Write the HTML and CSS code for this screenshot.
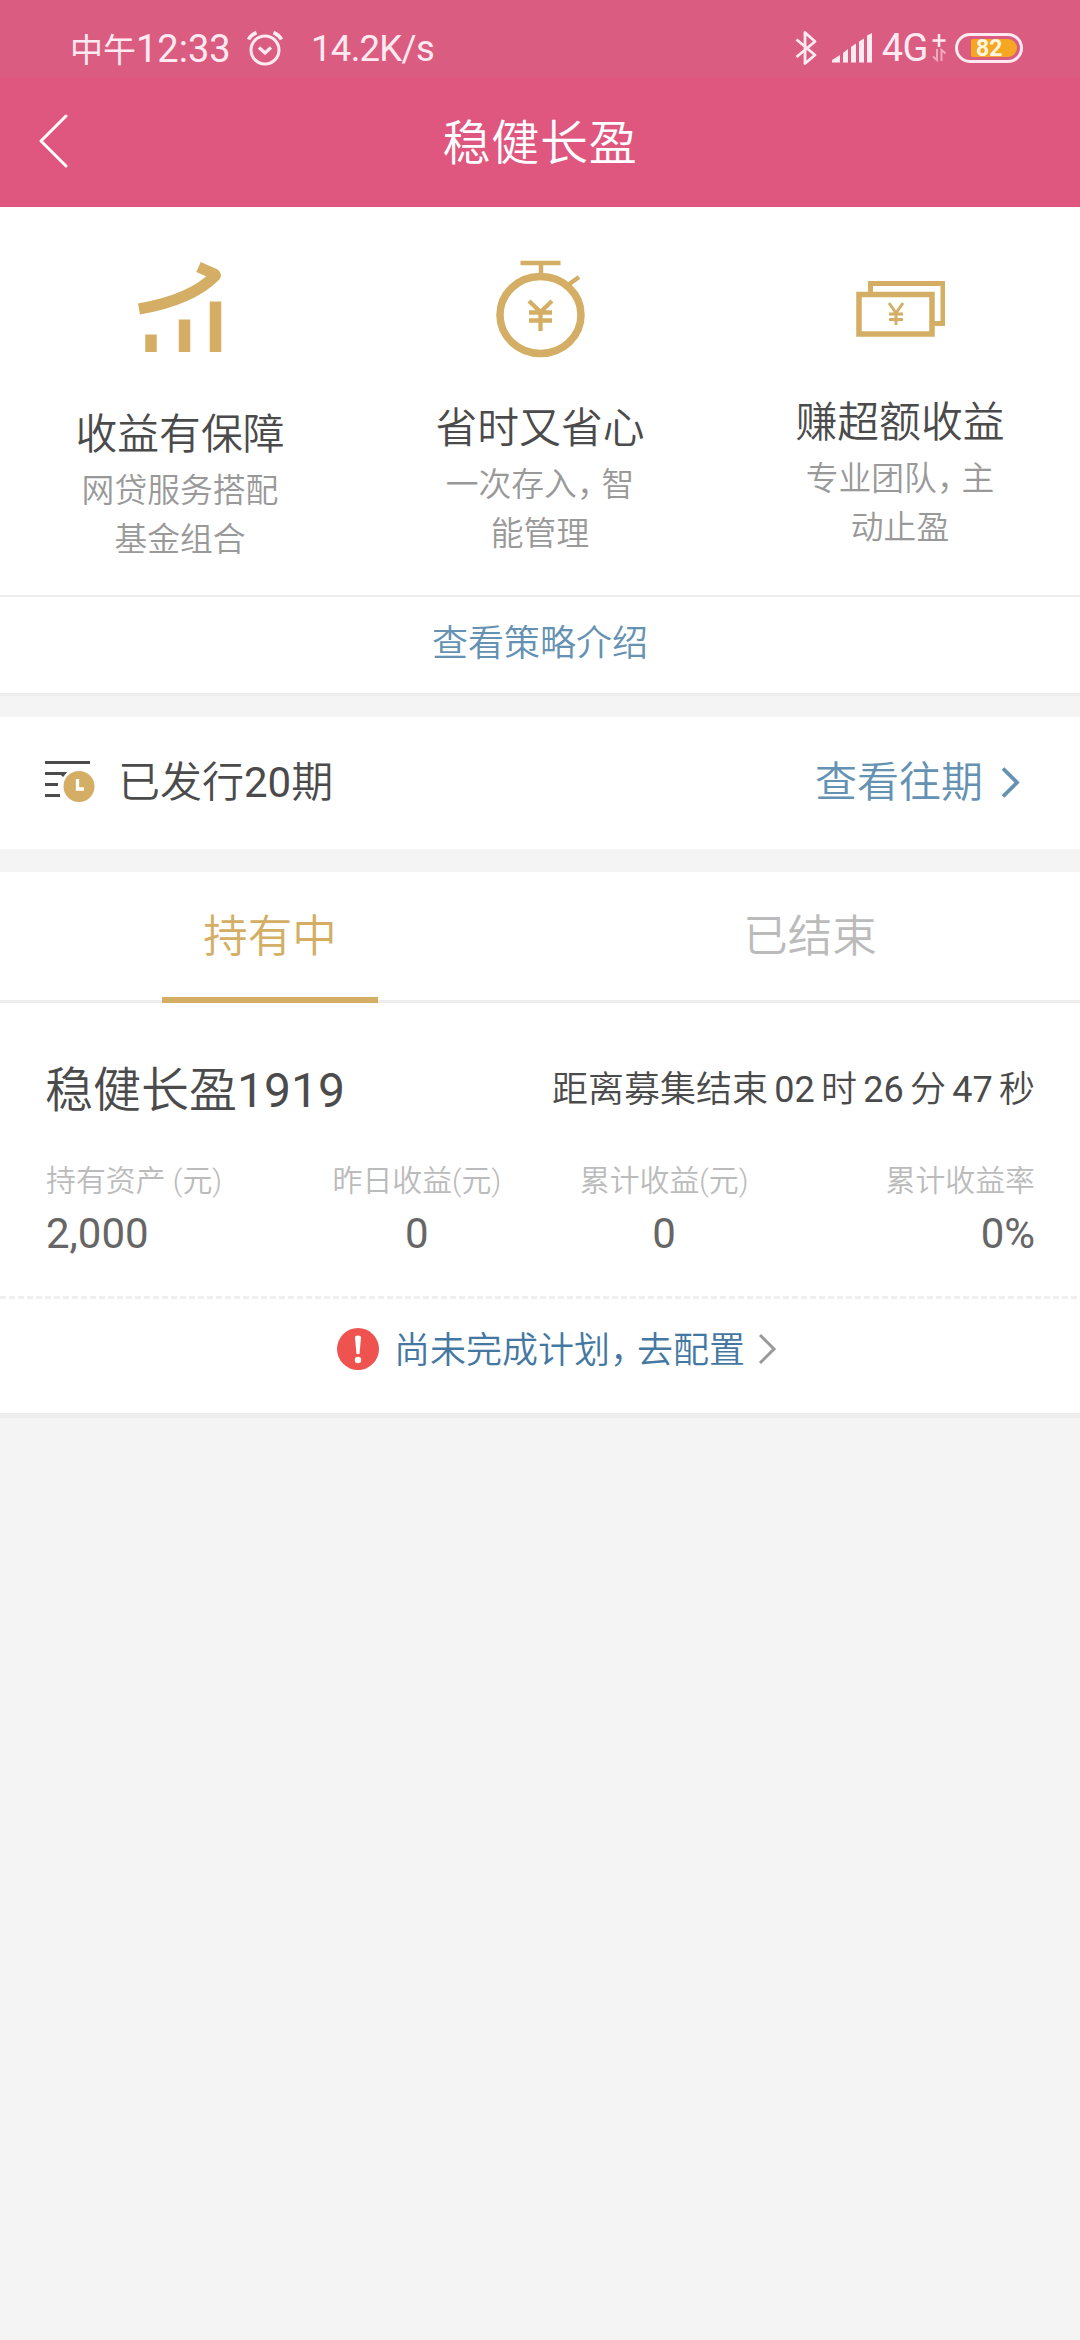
FILE: index.html
```html
<!DOCTYPE html>
<html lang="zh-CN">
<head>
<meta charset="utf-8">
<title>稳健长盈</title>
<link rel="stylesheet" href="styles.css">
</head>
<body>
<header class="header">
  <div class="status">
    <div class="status-left">
      <span class="time"><span class="noon">中午</span>12:33</span>
      <svg class="alarm" width="36" height="36" viewBox="0 0 36 36" fill="none" stroke="currentColor" stroke-width="3">
        <circle cx="18" cy="20" r="14"/>
        <path d="M1.500 9.500Q4 5 9.500 2.500M34.500 9.500Q32 5 26.500 2.500" stroke-width="3.600"/>
        <path d="M12 17.500L18 23L24 17.500" stroke-width="3.200"/>
      </svg>
      <span class="speed">14.2K/s</span>
    </div>
    <div class="status-right">
      <svg class="bluetooth" width="22" height="36" viewBox="0 0 22 36" fill="none" stroke="currentColor" stroke-width="2.800" stroke-linejoin="round">
        <path d="M1.500 9.500L20 25L10 33.500V2.500L20 11.500L1.500 27"/>
      </svg>
      <svg class="signal" width="42" height="30" viewBox="0 0 42 30" fill="currentColor">
        <path d="M0 29.500V27L8 22V29.500ZM11 29.500V20L16 16V29.500ZM19 29.500V14L24 10.500V29.500ZM27 29.500V8.500L32 5.500V29.500ZM35 29.500V2.500L40 0V29.500Z"/>
      </svg>
      <span class="network">4G</span>
      <svg class="data" width="14" height="30" viewBox="0 0 14 30" fill="none" stroke="currentColor">
        <path d="M7 1V14M.5 7.500H13.500" stroke-width="2.600"/>
        <path d="M5 16V27L1 23.500M9.500 28V17L13.500 20.500" stroke-width="2" opacity=".55"/>
      </svg>
      <div class="battery"><span class="level">82</span></div>
    </div>
  </div>
  <div class="navbar">
    <svg class="back" width="32" height="56" viewBox="0 0 32 56" fill="none" stroke="currentColor" stroke-width="3" stroke-linecap="round" stroke-linejoin="round">
      <path d="M27 3L2 28L27 53"/>
    </svg>
    <h1 class="title">稳健长盈</h1>
  </div>
</header>

<main>
  <section class="features">
    <div class="feature feature-growth">
      <svg class="feature-icon" width="90" height="100" viewBox="135 260 90 100" fill="none" stroke="currentColor">
        <path d="M139 309Q191 300 215 276Q216 275 214.500 274L198.500 267" stroke-width="11"/>
        <path d="M151 334.500V352M184.500 319.500V352M215.500 301.500V352" stroke-width="11.500"/>
      </svg>
      <h2 class="feature-title">收益有保障</h2>
      <p class="feature-text">网贷服务搭配<br>基金组合</p>
    </div>
    <div class="feature feature-time">
      <svg class="feature-icon" width="90" height="100" viewBox="495 260 90 100" fill="none" stroke="currentColor">
        <ellipse cx="540.500" cy="315" rx="40.500" ry="38.500" stroke-width="7.500"/>
        <path d="M520.500 263H560.500M541 263V275M568 285L579 277" stroke-width="4.500"/>
        <path d="M529 301L540.500 312L552 301M540.500 311V331M529 312.500H552M529 320.500H552" stroke-width="4.300"/>
      </svg>
      <h2 class="feature-title">省时又省心</h2>
      <p class="feature-text">一次存入<span class="comma">，</span>智<br>能管理</p>
    </div>
    <div class="feature feature-money">
      <svg class="feature-icon" width="90" height="100" viewBox="855 260 90 100" fill="none" stroke="currentColor">
        <path d="M859 294.500H932V334H859Z" stroke-width="5.500"/>
        <path d="M870.500 294V283.500H943V323.500H933" stroke-width="5"/>
        <path d="M889 303L896 313L903 303M896 312V325M889 314H903M889 319.500H903" stroke-width="3"/>
      </svg>
      <h2 class="feature-title">赚超额收益</h2>
      <p class="feature-text">专业团队<span class="comma">，</span>主<br>动止盈</p>
    </div>
  </section>
  <a class="strategy">查看策略介绍</a>

  <section class="issued">
    <svg class="issued-icon" width="50" height="44" viewBox="45 761 50 44">
      <path d="M45 762.500H90M45 773.500H64L62 776M45 784.500H58M45 795.500H60" fill="none" stroke="#4b4b4b" stroke-width="3"/>
      <circle cx="79" cy="786.500" r="15.500" fill="#d3ae64"/>
      <path d="M77.500 779V789H84" fill="none" stroke="#fff" stroke-width="3.300"/>
    </svg>
    <span class="issued-count">已发行<b>20</b>期</span>
    <a class="history">查看往期</a>
    <svg class="history-arrow" width="20" height="32" viewBox="0 0 20 32" fill="none" stroke="#6591b3" stroke-width="3.800">
      <path d="M2 1.500L16 15.500L2 29.500"/>
    </svg>
  </section>

  <nav class="tabs">
    <a class="tab tab-active"><span>持有中</span></a>
    <a class="tab"><span>已结束</span></a>
  </nav>

  <section class="plan">
    <div class="plan-head">
      <h3 class="plan-name">稳健长盈<b>1919</b></h3>
      <span class="countdown">距离募集结束 <b>02</b> 时 <b>26</b> 分 <b>47</b> 秒</span>
    </div>
    <dl class="stats">
      <div class="stat"><dt>持有资产 (元)</dt><dd>2,000</dd></div>
      <div class="stat"><dt>昨日收益(元)</dt><dd>0</dd></div>
      <div class="stat"><dt>累计收益(元)</dt><dd>0</dd></div>
      <div class="stat"><dt>累计收益率</dt><dd>0%</dd></div>
    </dl>
    <svg class="dashes" width="1080" height="3" viewBox="0 0 1080 3"><path d="M0 1.500H1080" stroke="#efefef" stroke-width="3" stroke-dasharray="6 3"/></svg>
    <a class="configure">
      <svg class="alert" width="42" height="42" viewBox="0 0 42 42">
        <circle cx="21" cy="21" r="21" fill="#ef5350"/>
        <path d="M18 9.500Q18 7.500 21 7.500T24 9.500L22.500 26H19.500Z" fill="#fff"/>
        <circle cx="21" cy="32" r="3.200" fill="#fff"/>
      </svg>
      <span class="configure-text">尚未完成计划<span class="comma">，</span>去配置</span>
      <svg class="configure-arrow" width="20" height="32" viewBox="0 0 20 32" fill="none" stroke="#999" stroke-width="3">
        <path d="M2 2L16 16L2 30"/>
      </svg>
    </a>
  </section>
</main>
</body>
</html>
```
FILE: styles.css
```css
* { box-sizing: border-box; margin: 0; padding: 0; }
body {
  width: 1080px;
  min-height: 2340px;
  background: #f4f4f4;
  color: #4b4b4b;
  font-family: Roboto, "Noto Sans CJK SC", sans-serif;
  font-weight: 350;
}
h1, h2, h3 { font-weight: 350; }
b { font-weight: 400; }
svg { display: block; flex: none; }
span, a, h1, h2, h3 { white-space: nowrap; }

.header { height: 207px; background: #df577f; color: #fff; }
.status {
  height: 77px;
  padding: 17px 57px 0 70px;
  display: flex;
  justify-content: space-between;
  background: #da5d81;
  color: #ffeaf1;
  font-weight: 400;
}
.status-left, .status-right { display: flex; align-items: center; height: 62px; }
.time { font-size: 38px; line-height: 62px; width: 177px; padding-top: 3px; }
.noon { font-size: 33px; }
.speed { font-size: 36.500px; letter-spacing: -.7px; margin-left: 28px; padding-top: 1px; }
.bluetooth { margin-right: 15px; }
.network { font-size: 38px; letter-spacing: -.5px; margin-left: 8px; }
.data { margin: 0 9px 0 4px; }
.battery { width: 68px; height: 30px; border: 3px solid #ffeaf1; border-radius: 15px; padding: 3px 3px 3px 13px; }
.level {
  display: block;
  height: 18px;
  padding-left: 5px;
  border-radius: 2px 9px 9px 2px;
  background: #f5a623;
  color: #fff6df;
  font-size: 23px;
  font-weight: 700;
  line-height: 19px;
}
.navbar { height: 130px; padding-top: 29px; display: grid; grid-template-columns: 80px 1fr 80px; }
.back { margin: 7px 0 0 39px; }
.title { padding-top: 3px; font-size: 48px; line-height: 70px; letter-spacing: .8px; text-align: center; }

.features { height: 390px; display: grid; grid-template-columns: repeat(3, 1fr); background: #fff; border-bottom: 2px solid #eee; }
.feature { display: flex; flex-direction: column; align-items: center; text-align: center; padding-top: 53px; }
.feature-icon { color: #d3ae64; }
.feature-title { font-size: 41.800px; line-height: 62px; }
.feature-text { padding-top: 1px; color: #999; font-size: 32.800px; line-height: 49px; }
.feature-growth .feature-title { margin-top: 44px; }
.feature-time .feature-title { margin-top: 38px; }
.feature-money .feature-title { margin-top: 32px; }
.comma { letter-spacing: -.25em; }

.strategy { display: block; height: 99px; background: #fff; border-bottom: 3px solid #ededed; color: #6591b3; font-size: 36px; line-height: 94px; text-align: center; }

.issued { height: 132px; margin-top: 21px; padding: 0 59px 0 45px; display: flex; align-items: center; background: #fff; font-size: 42px; line-height: 60px; }
.issued-count { margin-left: 23px; }
.history { margin-left: auto; color: #6591b3; }
.history-arrow { margin-left: 18px; }

.tabs { height: 131px; margin-top: 23px; display: grid; grid-template-columns: 1fr 1fr; background: #fff; border-bottom: 3px solid #ededed; }
.tab { display: flex; justify-content: center; color: #bbb; font-size: 44.500px; line-height: 130px; }
.tab span { width: 216px; height: 131px; text-align: center; }
.tab-active { color: #d3ae64; }
.tab-active span { border-bottom: 6px solid #d3ae64; }

.plan { height: 415px; background: #fff; border-bottom: 5px solid #ededed; }
.plan-head { height: 172px; padding: 0 45px; display: flex; justify-content: space-between; line-height: 175px; }
.plan-name { font-size: 48px; }
.countdown { font-size: 36px; word-spacing: -2.500px; }
.stats { height: 121px; padding: 0 45px 0 46px; display: grid; grid-template-columns: repeat(4, 1fr); text-align: center; }
.stat:first-child { text-align: left; }
.stat:last-child { text-align: right; }
.stat dt { color: #bbb; font-size: 29.900px; line-height: 46px; white-space: nowrap; margin-top: -17px; }
.stat dd { color: #666; font-size: 42px; line-height: 60px; font-weight: 400; }
.configure { height: 100px; padding-left: 337px; display: flex; align-items: center; color: #4478a2; font-size: 36px; }
.configure-text { margin-left: 15px; padding-bottom: 4px; }
.configure-arrow { margin-left: 13px; }
```
